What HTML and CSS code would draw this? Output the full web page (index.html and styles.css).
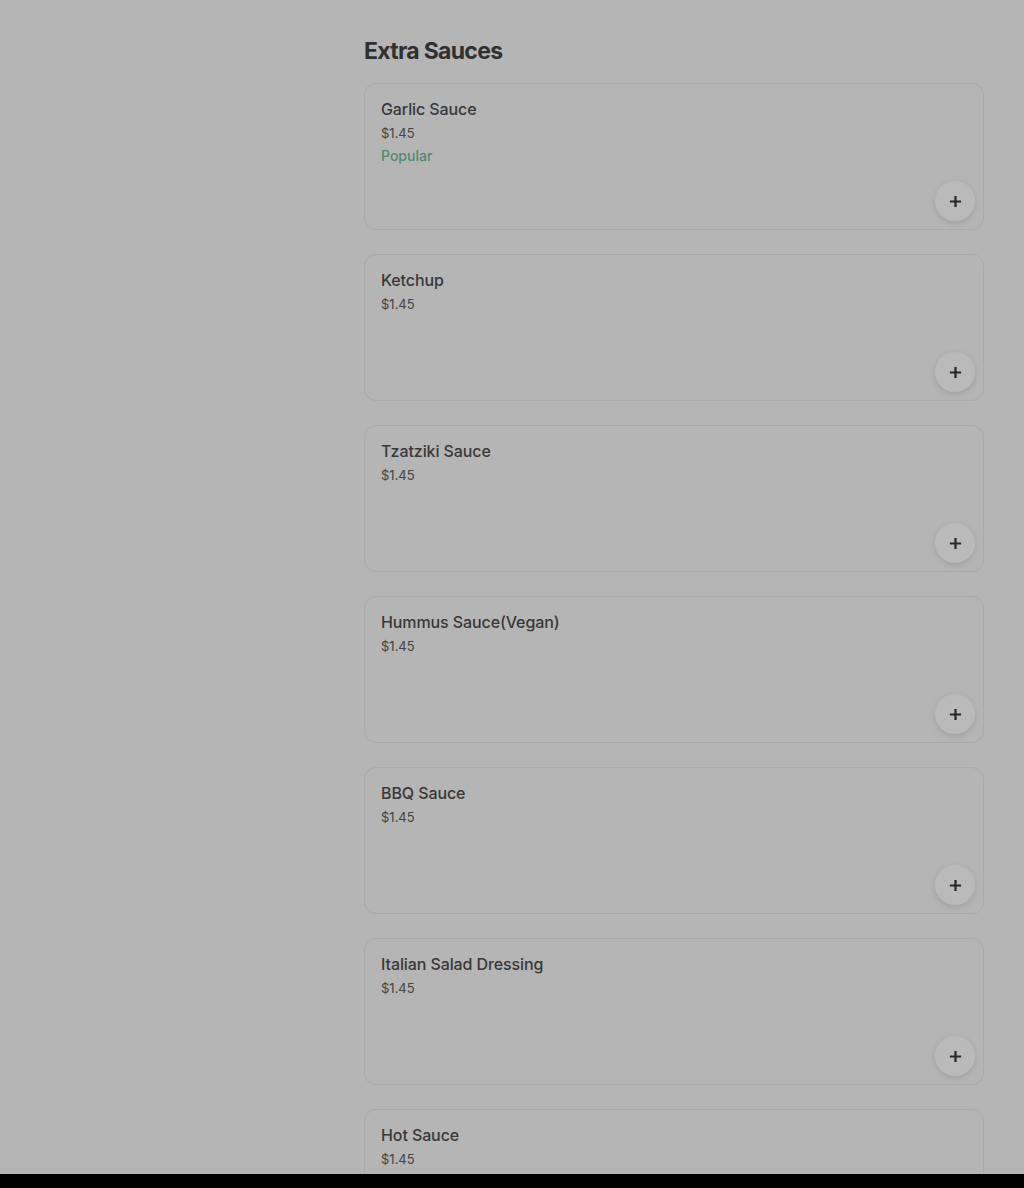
FILE: index.html
```html
<!DOCTYPE html>
<html lang="en">
<head>
  <meta charset="UTF-8" />
  <title>Extra Sauces</title>
  <link rel="stylesheet" href="styles.css">
</head>
<body>
  <div class="page">
    <aside class="side"></aside>

    <!-- menu section -->
    <section class="menu">
      <h2>Extra Sauces</h2>
      <ul class="items">
        <li class="item">
          <div class="name">Garlic Sauce</div>
          <div class="price">$1.45</div>
          <div class="tag">Popular</div>
          <button class="add"><svg viewBox="0 0 14 14"><path d="M7 1v12M1 7h12"/></svg></button>
        </li>
        <li class="item">
          <div class="name">Ketchup</div>
          <div class="price">$1.45</div>
          <button class="add"><svg viewBox="0 0 14 14"><path d="M7 1v12M1 7h12"/></svg></button>
        </li>
        <li class="item">
          <div class="name">Tzatziki Sauce</div>
          <div class="price">$1.45</div>
          <button class="add"><svg viewBox="0 0 14 14"><path d="M7 1v12M1 7h12"/></svg></button>
        </li>
        <li class="item">
          <div class="name">Hummus Sauce(Vegan)</div>
          <div class="price">$1.45</div>
          <button class="add"><svg viewBox="0 0 14 14"><path d="M7 1v12M1 7h12"/></svg></button>
        </li>
        <li class="item">
          <div class="name">BBQ Sauce</div>
          <div class="price">$1.45</div>
          <button class="add"><svg viewBox="0 0 14 14"><path d="M7 1v12M1 7h12"/></svg></button>
        </li>
        <li class="item">
          <div class="name">Italian Salad Dressing</div>
          <div class="price">$1.45</div>
          <button class="add"><svg viewBox="0 0 14 14"><path d="M7 1v12M1 7h12"/></svg></button>
        </li>
        <li class="item">
          <div class="name">Hot Sauce</div>
          <div class="price">$1.45</div>
          <button class="add"><svg viewBox="0 0 14 14"><path d="M7 1v12M1 7h12"/></svg></button>
        </li>
      </ul>
    </section>
  </div>

  <div class="bottom-bar"></div>
</body>
</html>
```

FILE: styles.css
```css
body {
  margin: 0;
  background: #b5b5b5;
  font-family: 'Inter', 'Liberation Sans', sans-serif;
  color: #333;
  overflow: hidden;
  height: 1188px;
}

.page {
  display: flex;
  padding: 0 40px 0 0;
}

.side {
  width: 364px;
  flex-shrink: 0;
}

.menu {
  flex: 1;
  padding-top: 35px;
}

h2 {
  margin: 0 0 16px;
  font-size: 23px;
  line-height: 32px;
  font-weight: 700;
  letter-spacing: -0.7px;
  color: #303030;
}

/* item cards */
.items {
  list-style: none;
  margin: 0;
  padding: 0;
  display: flex;
  flex-direction: column;
  gap: 24px;
}

.item {
  position: relative;
  padding: 15px 16px 16px;
  border: 1px solid #a9a9a9;
  border-radius: 12px;
  height: 114px;
}

.name {
  font-size: 16px;
  line-height: 20px;
  font-weight: 500;
  letter-spacing: -0.1px;
  color: #383838;
}

.price {
  font-size: 13px;
  line-height: 28px;
  color: #444;
}

.tag {
  font-size: 14px;
  line-height: 18px;
  font-weight: 500;
  color: #4f8a6d;
}

.add {
  position: absolute;
  right: 8px;
  bottom: 8px;
  width: 40px;
  height: 40px;
  border: none;
  border-radius: 50%;
  background: #bababa;
  box-shadow: 0 2px 6px rgba(0, 0, 0, 0.12);
  padding: 0;
  display: flex;
  align-items: center;
  justify-content: center;
}

.add svg {
  width: 13px;
  height: 13px;
  stroke: #262626;
  stroke-width: 2.4;
  fill: none;
}

.bottom-bar {
  position: fixed;
  left: 0;
  right: 0;
  bottom: 0;
  height: 14px;
  background: #000;
}
```
